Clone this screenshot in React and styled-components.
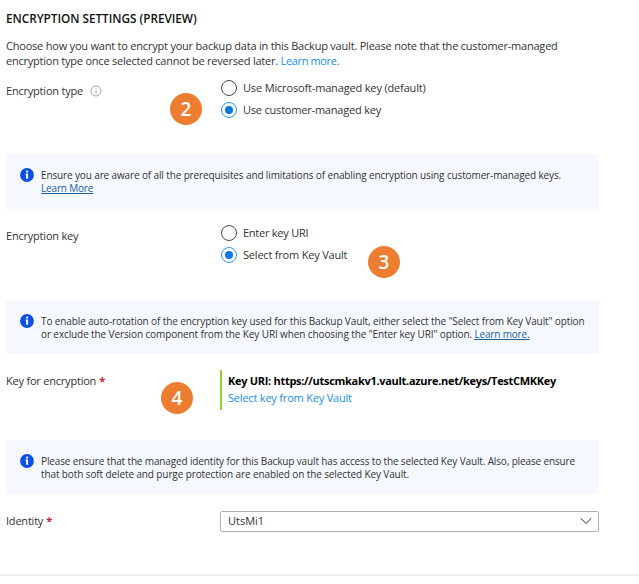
import React from "react";
import styled, { createGlobalStyle } from "styled-components";

const GlobalStyle = createGlobalStyle`
  * { box-sizing: border-box; }
  body { margin: 0; background: #fff; }
`;

const Page = styled.main`
  position: relative;
  width: 639px;
  height: 584px;
  padding: 10px 40px 0 6px;
  overflow: hidden;
  background: #fff;
  color: #333;
  font: 400 11px/14.5px "Open Sans", "Noto Sans", sans-serif;
`;

const Title = styled.h1`
  height: 29px;
  margin: 0;
  color: #111;
  font-size: 11.8px;
  font-weight: 600;
  line-height: 16px;
  letter-spacing: -0.04px;
`;

const Line = styled.span`
  display: block;
  white-space: nowrap;
  letter-spacing: ${(p) => p.$tracking ?? -0.2}px;
`;

const Description = styled.p`
  height: 38px;
  margin: 0;
`;

const Link = styled.a`
  color: #1690e2;
  letter-spacing: ${(p) => p.$tracking ?? -0.2}px;
`;

const InfoLink = styled.a`
  color: #1a5f9c;
  letter-spacing: -0.17px;
  text-decoration: underline;
  text-underline-offset: 1px;
`;

const Field = styled.section`
  display: grid;
  grid-template-columns: 214px 379px;
  align-items: start;
  height: ${(p) => p.$height}px;
  padding-top: ${(p) => p.$top ?? 0}px;
`;

const Label = styled.div`
  display: flex;
  align-items: center;
  gap: ${(p) => p.$gap ?? 3}px;
  height: ${(p) => p.$height ?? 28}px;
  white-space: nowrap;
  letter-spacing: -0.21px;
`;

const Required = styled.span`
  color: #c4212e;
  font-size: 11px;
  font-weight: 700;
`;

const RadioGroup = styled.div`
  display: flex;
  flex-direction: column;
`;

const RadioRow = styled.label`
  display: flex;
  align-items: center;
  gap: 6px;
  height: 22px;
  padding-left: 1px;
`;

const RadioMark = styled.span`
  display: flex;
  align-items: center;
  justify-content: center;
  width: 16px;
  height: 16px;
  border: 1px solid ${(p) => (p.$checked ? "#2b9be8" : "#4a4a4a")};
  border-radius: 50%;

  &::after {
    content: "";
    width: 8px;
    height: 8px;
    border-radius: 50%;
    background: ${(p) => (p.$checked ? "#0a78e0" : "transparent")};
  }
`;

const InfoPanel = styled.aside`
  display: flex;
  gap: 7px;
  width: 593px;
  height: 54.5px;
  padding: 14px 0 0 14px;
  background: #f5f8ff;
  font-size: 10px;
  line-height: 13px;
`;

const InfoText = styled.div`
  padding-top: 1px;
`;

const KeyValue = styled.div`
  height: 40px;
  padding: 4px 0 0 6px;
  border-left: 2px solid #98cf35;
`;

const KeyUri = styled.div`
  height: 17px;
  color: #000;
  font-weight: 700;
`;

const Select = styled.div`
  display: flex;
  align-items: center;
  justify-content: space-between;
  width: 379px;
  height: 21px;
  padding: 0 6px 0 7px;
  border: 1px solid #b0b0b0;
  border-radius: 2px;
`;

const Divider = styled.hr`
  height: 2px;
  margin: 0 -40px 0 -6px;
  border: 0;
  background: #f0f0f0;
`;

const Badge = styled.span`
  position: absolute;
  left: ${(p) => p.$x - 16}px;
  top: ${(p) => p.$y - 16}px;
  width: 32px;
  height: 32px;
  border-radius: 50%;
  background: #ed7d31;
  color: #fff;
  font-size: 19px;
  font-weight: 600;
  line-height: 32px;
  text-align: center;
`;

function Radio({ checked, tracking, children }) {
  return (
    <RadioRow>
      <RadioMark $checked={checked} />
      <Line $tracking={tracking}>{children}</Line>
    </RadioRow>
  );
}

function InfoIcon() {
  return (
    <svg width="14" height="14" viewBox="0 0 14 14">
      <circle cx="7" cy="7" r="6.9" fill="#0a50e6" />
      <circle cx="7.1" cy="3.6" r="1.15" fill="#fff" />
      <path d="M5.5 5.6H8.1V10.8H6.1V6.8H5.5Z" fill="#fff" />
    </svg>
  );
}

function Info({ children }) {
  return (
    <InfoPanel>
      <InfoIcon />
      <InfoText>{children}</InfoText>
    </InfoPanel>
  );
}

export default function App() {
  return (
    <Page>
      <GlobalStyle />
      <Title>ENCRYPTION SETTINGS (PREVIEW)</Title>
      <Description>
        <Line $tracking={-0.211}>
          Choose how you want to encrypt your backup data in this Backup vault. Please note that the customer-managed
        </Line>
        <Line $tracking={-0.225}>
          encryption type once selected cannot be reversed later. <Link $tracking={-0.36}>Learn more.</Link>
        </Line>
      </Description>

      <Field $height={77}>
        <Label $gap={7}>
          Encryption type
          <svg width="12" height="12" viewBox="0 0 12 12" fill="none" stroke="#a6a6a6">
            <circle cx="6" cy="6" r="5" />
            <path d="M6 5.2V8.7M6 3.2V4.3" />
          </svg>
        </Label>
        <RadioGroup>
          <Radio tracking={-0.16}>Use Microsoft-managed key (default)</Radio>
          <Radio checked>Use customer-managed key</Radio>
        </RadioGroup>
      </Field>

      <Info>
        <Line $tracking={-0.129}>
          Ensure you are aware of all the prerequisites and limitations of enabling encryption using customer-managed keys.
        </Line>
        <Line>
          <InfoLink>Learn More</InfoLink>
        </Line>
      </Info>

      <Field $height={91} $top={13.5}>
        <Label>Encryption key</Label>
        <RadioGroup>
          <Radio tracking={-0.25}>Enter key URI</Radio>
          <Radio checked>Select from Key Vault</Radio>
        </RadioGroup>
      </Field>

      <Info>
        <Line $tracking={-0.115}>
          To enable auto-rotation of the encryption key used for this Backup Vault, either select the "Select from Key Vault" option
        </Line>
        <Line $tracking={-0.11}>
          or exclude the Version component from the Key URI when choosing the "Enter key URI" option. <InfoLink>Learn more.</InfoLink>
        </Line>
      </Info>

      <Field $height={85.5} $top={16}>
        <Label $height={22}>
          Key for encryption <Required>*</Required>
        </Label>
        <KeyValue>
          <KeyUri>
            <Line $tracking={-0.292}>Key URI: https://utscmkakv1.vault.azure.net/keys/TestCMKKey</Line>
          </KeyUri>
          <Link>Select key from Key Vault</Link>
        </KeyValue>
      </Field>

      <Info>
        <Line $tracking={-0.137}>
          Please ensure that the managed identity for this Backup vault has access to the selected Key Vault. Also, please ensure
        </Line>
        <Line $tracking={-0.11}>
          that both soft delete and purge protection are enabled on the selected Key Vault.
        </Line>
      </Info>

      <Field $height={80} $top={16.5}>
        <Label $height={21}>
          Identity <Required>*</Required>
        </Label>
        <Select>
          UtsMi1
          <svg width="12" height="8" viewBox="0 0 12 8" fill="none" stroke="#737373" strokeWidth="1.1">
            <path d="M0.7 1.2L6 6.5L11.3 1.2" />
          </svg>
        </Select>
      </Field>

      <Divider />
      <Badge $x={186} $y={109}>2</Badge>
      <Badge $x={384} $y={262}>3</Badge>
      <Badge $x={177} $y={398}>4</Badge>
    </Page>
  );
}
